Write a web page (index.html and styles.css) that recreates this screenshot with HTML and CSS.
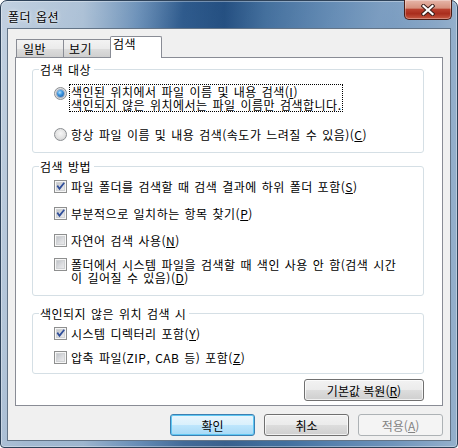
FILE: index.html
```html
<!DOCTYPE html>
<html lang="ko">
  <head>
    <meta charset="UTF-8" />
    <title>폴더 옵션</title>
    <link rel="stylesheet" href="styles.css">
  </head>
  <body>
    <div class="dialog">
      <header class="dialog__titlebar">
        <span class="dialog__title">폴더 옵션</span>
        <button class="dialog__close" aria-label="닫기">
          <svg width="14" height="12" viewBox="0 0 14 12">
            <path d="M2.5 2 L11.5 10 M11.5 2 L2.5 10" stroke="#3a1f1b" stroke-width="4.2" stroke-linecap="square" fill="none"/>
            <path d="M2.5 2 L11.5 10 M11.5 2 L2.5 10" stroke="#fff" stroke-width="2.2" stroke-linecap="square" fill="none"/>
          </svg>
        </button>
      </header>
      <div class="dialog__client">
        <nav class="tabs">
          <span class="tabs__item tabs__item--general">일반</span>
          <span class="tabs__item tabs__item--view">보기</span>
          <span class="tabs__item tabs__item--active">검색</span>
        </nav>
        <section class="page">
          <!-- 검색 대상 -->
          <fieldset class="group group--target">
            <legend class="group__legend">검색 대상</legend>
            <label class="option option--multi">
              <span class="radio radio--on"></span>
              <span class="option__text option__text--focus">색인된 위치에서 파일 이름 및 내용 검색(<u>I</u>)<br>색인되지 않은 위치에서는 파일 이름만 검색합니다.</span>
            </label>
            <label class="option">
              <span class="radio"></span>
              <span class="option__text">항상 파일 이름 및 내용 검색(속도가 느려질 수 있음)(<u>C</u>)</span>
            </label>
          </fieldset>
          <!-- 검색 방법 -->
          <fieldset class="group group--method">
            <legend class="group__legend">검색 방법</legend>
            <label class="option">
              <span class="check"><svg width="11" height="11" viewBox="0 0 11 11"><path d="M1.6 5.2 L3 4.1 L4.4 6.2 L8.6 1.2 L9.9 2.2 L4.5 9.2 Z" fill="#2f4e9a"/></svg></span>
              <span class="option__text">파일 폴더를 검색할 때 검색 결과에 하위 폴더 포함(<u>S</u>)</span>
            </label>
            <label class="option">
              <span class="check"><svg width="11" height="11" viewBox="0 0 11 11"><path d="M1.6 5.2 L3 4.1 L4.4 6.2 L8.6 1.2 L9.9 2.2 L4.5 9.2 Z" fill="#2f4e9a"/></svg></span>
              <span class="option__text">부분적으로 일치하는 항목 찾기(<u>P</u>)</span>
            </label>
            <label class="option">
              <span class="check"></span>
              <span class="option__text">자연어 검색 사용(<u>N</u>)</span>
            </label>
            <label class="option option--multi">
              <span class="check"></span>
              <span class="option__text">폴더에서 시스템 파일을 검색할 때 색인 사용 안 함(검색 시간<br>이 길어질 수 있음)(<u>D</u>)</span>
            </label>
          </fieldset>
          <!-- 색인되지 않은 위치 -->
          <fieldset class="group group--unindexed">
            <legend class="group__legend">색인되지 않은 위치 검색 시</legend>
            <label class="option">
              <span class="check"><svg width="11" height="11" viewBox="0 0 11 11"><path d="M1.6 5.2 L3 4.1 L4.4 6.2 L8.6 1.2 L9.9 2.2 L4.5 9.2 Z" fill="#2f4e9a"/></svg></span>
              <span class="option__text">시스템 디렉터리 포함(<u>Y</u>)</span>
            </label>
            <label class="option">
              <span class="check"></span>
              <span class="option__text">압축 파일(ZIP, CAB 등) 포함(<u>Z</u>)</span>
            </label>
          </fieldset>
          <div class="page__footer">
            <button class="btn btn--restore">기본값 복원(<u>R</u>)</button>
          </div>
        </section>
        <div class="dialog__buttons">
          <button class="btn btn--default">확인</button>
          <button class="btn">취소</button>
          <button class="btn" disabled>적용(<u>A</u>)</button>
        </div>
      </div>
    </div>
  </body>
</html>
```

FILE: styles.css
```css
:root {
  --color-text: #000;
  --color-face: #f0f0f0;
  --color-tab-border: #898c95;
  --color-group: #d5dfe5;
  font-family: 'Noto Sans CJK KR', sans-serif;
  font-size: 12px;
  line-height: 13px;
  letter-spacing: 0.5px;
  word-spacing: 1px;
  color: var(--color-text);
}
* {
  margin: 0;
  padding: 0;
  box-sizing: border-box;
}
body {
  width: 458px;
  height: 448px;
  overflow: hidden;
}
/* 창 */
.dialog {
  width: 458px;
  height: 448px;
  padding: 0 6px 6px;
  border: 1px solid #2e4259;
  border-radius: 7px 7px 4px 4px;
  background:
    linear-gradient(110deg, rgba(255, 255, 255, 0.3) 0%, rgba(255, 255, 255, 0.12) 22%, rgba(255, 255, 255, 0) 30%, rgba(255, 255, 255, 0.12) 62%, rgba(255, 255, 255, 0) 72%),
    linear-gradient(90deg, #a7bcd3 0%, #9ab3cd 18%, #5c85b1 30%, #2f5b8d 40%, #1f4b7e 49%, #3a6898 58%, #5580ad 72%, #6f94bb 86%, #95b0cc 100%);
  box-shadow: inset 0 0 0 1px rgba(255, 255, 255, 0.35);
}
.dialog__titlebar {
  display: flex;
  align-items: flex-start;
  height: 27px;
}
.dialog__title {
  margin: 9px 0 0 1px;
  text-shadow: 0 0 4px rgba(255, 255, 255, 0.9), 0 0 2px rgba(255, 255, 255, 0.8);
}
.dialog__close {
  display: grid;
  place-items: center;
  width: 48px;
  height: 20px;
  margin: -1px -1px 0 auto;
  border: 1px solid #4a1d16;
  border-top: none;
  border-radius: 0 0 5px 5px;
  background: linear-gradient(#e6b6a9 0%, #d6917e 42%, #b9402e 50%, #a92d1d 72%, #c65a43 100%);
  box-shadow: inset 0 0 0 1px rgba(255, 255, 255, 0.3);
}
/* 클라이언트 영역 */
.dialog__client {
  height: 413px;
  padding: 7px 7px 0 7px;
  border: 1px solid #637487;
  background-color: var(--color-face);
}
/* 탭 */
.tabs {
  display: flex;
  align-items: flex-end;
  height: 21px;
  padding-left: 1px;
}
.tabs__item {
  height: 18px;
  padding: 2px 0 0 6px;
  border: 1px solid var(--color-tab-border);
  border-bottom: none;
  background: linear-gradient(#f3f3f3 0%, #ebebeb 50%, #dddddd 52%, #cfcfcf 100%);
}
.tabs__item--general {
  width: 48px;
}
.tabs__item--view {
  width: 47px;
  border-left: none;
  padding-left: 5px;
}
.tabs__item--active {
  position: relative;
  z-index: 1;
  width: 52px;
  height: 22px;
  margin: 0 0 -1px -1px;
  padding: 0 0 0 2px;
  border-radius: 2px 2px 0 0;
  background: #fff;
}
/* 탭 페이지 */
.page {
  height: 349px;
  padding-top: 5px;
  border: 1px solid var(--color-tab-border);
  background-color: #fff;
}
/* 그룹 상자 */
.group {
  margin: 0 18px 0 16px;
  border: 1px solid var(--color-group);
  border-radius: 3px;
  min-inline-size: 0;
}
.group__legend {
  padding: 0 3px 0 1px;
}
.group--target {
  padding: 8px 0 10px 6px;
}
.group--target .option + .option {
  margin-top: 15px;
}
.group--method {
  margin-top: 7px;
  padding: 6px 0 10px 6px;
}
.group--method .option + .option {
  margin-top: 12px;
}
.group--method .option--multi {
  margin-top: 9px !important;
}
.group--unindexed {
  margin-top: 11px;
  padding: 6px 0 8px 6px;
}
.group--unindexed .option + .option {
  margin-top: 9px;
}
/* 옵션 행 */
.option {
  display: flex;
  align-items: center;
  gap: 2px;
  margin-left: 15px;
  white-space: nowrap;
}
.option--multi {
  align-items: flex-start;
}
.option__text {
  padding-left: 1px;
  border: 1px solid transparent;
}
.option__text--focus {
  border: 1px dotted #000;
}
/* 라디오 */
.radio {
  display: grid;
  place-items: center;
  flex-shrink: 0;
  width: 13px;
  height: 13px;
  border: 1px solid #8b8e92;
  border-radius: 50%;
  background: radial-gradient(circle at 50% 40%, #f6f6f6 0%, #e2e2e2 55%, #cbcbcb 100%);
}
.option--multi .radio {
  margin-top: 3px;
}
.radio--on::after {
  content: '';
  width: 7px;
  height: 7px;
  border-radius: 50%;
  background: radial-gradient(circle at 40% 35%, #b4e3ff 0%, #3d97e0 40%, #0e4c9b 100%);
  box-shadow: 0 0 0 1px rgba(20, 60, 120, 0.35);
}
/* 체크박스 */
.check {
  display: block;
  flex-shrink: 0;
  width: 13px;
  height: 13px;
  border: 1px solid #8e8f8f;
  background: linear-gradient(135deg, #b4b8be 0%, #dcdde0 55%, #f2f2f2 100%);
  box-shadow: inset 0 0 0 1px #f6f6f6, inset 0 0 0 2px #d0d2d4;
}
.check svg {
  display: block;
}
.option--multi .check {
  margin-top: 1px;
}
/* 버튼 */
.btn {
  width: 85px;
  height: 22px;
  border: 1px solid #707070;
  border-radius: 3px;
  font: inherit;
  line-height: 19px;
  color: var(--color-text);
  background: linear-gradient(#f2f2f2 0%, #ebebeb 50%, #dddddd 50%, #cfcfcf 100%);
  box-shadow: inset 0 0 0 1px rgba(255, 255, 255, 0.7);
}
.btn--default {
  border-color: #3c7fb1;
  background: linear-gradient(#eaf6fd 0%, #d9f0fc 50%, #bee6fd 50%, #a7d9f5 100%);
  box-shadow: inset 0 0 0 1px #5fc7f3;
}
.btn:disabled {
  border-color: #adb2b5;
  color: #838383;
  background: #f4f4f4;
  box-shadow: none;
}
.btn--restore {
  width: 120px;
}
.page__footer {
  display: flex;
  justify-content: flex-end;
  margin: 5px 18px 0 0;
}
.dialog__buttons {
  display: flex;
  justify-content: flex-end;
  gap: 9px;
  margin-top: 8px;
}
```
